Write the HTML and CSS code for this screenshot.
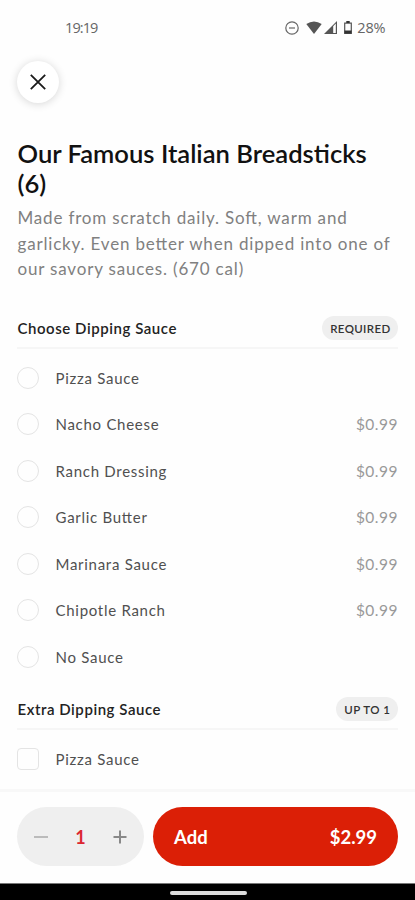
FILE: index.html
```html
<!DOCTYPE html>
<html lang="en">
<head>
<meta charset="utf-8">
<meta name="viewport" content="width=device-width, initial-scale=1">
<title>Our Famous Italian Breadsticks</title>
<link rel="stylesheet" href="styles.css">
</head>
<body>
<div class="screen">
  <header class="status">
    <span class="time">19:19</span>
    <div class="indicators">
      <svg class="dnd" width="14" height="14" viewBox="0 0 14 14"><circle cx="7" cy="7" r="6.2"/><path d="M4 7h6"/></svg>
      <svg class="solid wifi" width="16" height="13" viewBox="0 0 16 13"><path d="M.3 3Q8-2.2 15.7 3L8 13Z"/></svg>
      <svg class="solid signal" width="13" height="13" viewBox="0 0 13 13"><path d="M0 13 13 0V13Z"/><path class="hollow" d="M9.2 5.3 11.8 2.6V12H9.2Z"/></svg>
      <svg class="battery" width="8" height="13" viewBox="0 0 8 13"><path class="shell" d="M.7 2.2H7.3V12.3H.7Z"/><path d="M2.3 0h3.4v2H2.3ZM.5 9.5h7v3h-7Z"/></svg>
      <span>28%</span>
    </div>
  </header>
  <button class="close" aria-label="Close"><svg width="16" height="16" viewBox="0 0 16 16"><path d="M.8.8 15.2 15.2M15.2.8.8 15.2"/></svg></button>
  <main class="content">
    <h1>Our Famous Italian Breadsticks (6)</h1>
    <p class="description">Made from scratch daily. Soft, warm and<br>garlicky. Even better when dipped into one of<br>our savory sauces. (670 cal)</p>
    <section>
      <div class="section-head"><h2>Choose Dipping Sauce</h2><span class="tag">REQUIRED</span></div>
      <ul>
        <li><i class="radio"></i><span>Pizza Sauce</span></li>
        <li><i class="radio"></i><span>Nacho Cheese</span><b>$0.99</b></li>
        <li><i class="radio"></i><span>Ranch Dressing</span><b>$0.99</b></li>
        <li><i class="radio"></i><span>Garlic Butter</span><b>$0.99</b></li>
        <li><i class="radio"></i><span>Marinara Sauce</span><b>$0.99</b></li>
        <li><i class="radio"></i><span>Chipotle Ranch</span><b>$0.99</b></li>
        <li><i class="radio"></i><span>No Sauce</span></li>
      </ul>
    </section>
    <section class="extra">
      <div class="section-head"><h2>Extra Dipping Sauce</h2><span class="tag limit">UP TO 1</span></div>
      <ul>
        <li><i class="radio checkbox"></i><span>Pizza Sauce</span></li>
      </ul>
    </section>
  </main>
  <footer class="order">
    <div class="stepper">
      <svg class="minus" width="14" height="14" viewBox="0 0 14 14"><path d="M0 7h14"/></svg>
      <span>1</span>
      <svg class="plus" width="14" height="14" viewBox="0 0 14 14"><path d="M.5 7h13M7 .5v13"/></svg>
    </div>
    <button class="add"><span>Add</span><span class="total">$2.99</span></button>
  </footer>
  <div class="nav"><span></span></div>
</div>
</body>
</html>
```
FILE: styles.css
```css
* { box-sizing: border-box; }
body { margin: 0; background: #fefefe; font-family: Lato, sans-serif; color: #111; }
h1, h2, p, ul { margin: 0; padding: 0; }
button { border: 0; padding: 0; font-family: inherit; }
svg { display: block; flex: none; }
.screen { width: 415px; height: 900px; display: flex; flex-direction: column; overflow: hidden; }

.status { height: 55px; flex: none; display: flex; justify-content: space-between; align-items: center; padding: 0 29.5px 0 65px; font: 14.5px/20px "Open Sans", sans-serif; color: #666; }
.time { letter-spacing: -.9px; }
.indicators { display: flex; align-items: center; letter-spacing: -.1px; }
.dnd { fill: none; stroke: #666; stroke-width: 1.2; margin-right: 7px; }
.solid { fill: #555; }
.wifi { margin-right: 2px; }
.signal { margin-right: 7px; }
.signal .hollow { fill: #fefefe; }
.battery { margin-right: 5px; fill: #333; }
.battery .shell { fill: none; stroke: #555; stroke-width: 1.2; }

.close { width: 42px; height: 42px; margin: 6px 0 0 17px; flex: none; border-radius: 50%; background: #fff; box-shadow: 0 1px 9px rgba(0,0,0,.16); display: grid; place-items: center; }
.close svg { fill: none; stroke: #1a1a1a; stroke-width: 1.8; }

.content { padding: 35px 17px 0; flex: 1; min-height: 0; }
h1 { margin-left: .5px; font-size: 25.6px; line-height: 30px; font-weight: 600; }
.description { margin: 7px 0 0 .5px; font-size: 17px; line-height: 25.5px; letter-spacing: .82px; color: #808080; font-feature-settings: "liga" 1; }
section { margin-top: 27.5px; }
.section-head { height: 40px; display: flex; align-items: center; justify-content: space-between; border-bottom: 2px solid #f6f6f6; }
h2 { margin-left: .5px; font-size: 15px; line-height: 20px; font-weight: 600; letter-spacing: .55px; color: #222; font-feature-settings: "liga" 1; }
.tag { height: 24px; padding: 0 7.5px 0 8px; border-radius: 12px; background: #efefef; color: #333; font-size: 11.5px; line-height: 25px; font-weight: 600; letter-spacing: .35px; }
.limit { letter-spacing: .45px; }
ul { list-style: none; padding-top: 5.5px; }
li { height: 46.5px; display: flex; align-items: center; font-size: 15px; letter-spacing: .72px; color: #505050; font-feature-settings: "liga" 1; }
.radio { width: 22px; height: 22px; border: 1.5px solid #e4e4e4; border-radius: 50%; margin-right: 16.5px; }
.checkbox { border-radius: 4px; }
li b { margin-left: auto; font-weight: 400; font-size: 15.5px; letter-spacing: .5px; color: #999; }
.extra { margin-top: 10px; }

.order { height: 94px; flex: none; border-top: 3px solid #f8f8f8; padding: 15px 17px 0; display: flex; gap: 9px; }
.stepper { width: 127px; height: 59px; border-radius: 30px; background: #efefef; display: flex; align-items: center; justify-content: space-between; padding: 0 17px; font-size: 18px; font-weight: 700; color: #dc2631; }
.stepper svg { fill: none; stroke-width: 2; }
.minus { stroke: #bbb; }
.plus { stroke: #888; }
.add { flex: 1; height: 59px; border-radius: 30px; background: #db1f06; color: #fff; font-size: 18.5px; font-weight: 700; display: flex; justify-content: space-between; align-items: center; padding: 0 21px; }
.nav { height: 17px; flex: none; background: #000; border-top: 1px solid #777; display: flex; justify-content: center; padding: 7px 0 0 1px; }
.nav span { width: 77px; height: 4px; border-radius: 2px; background: #ddd; }
```
